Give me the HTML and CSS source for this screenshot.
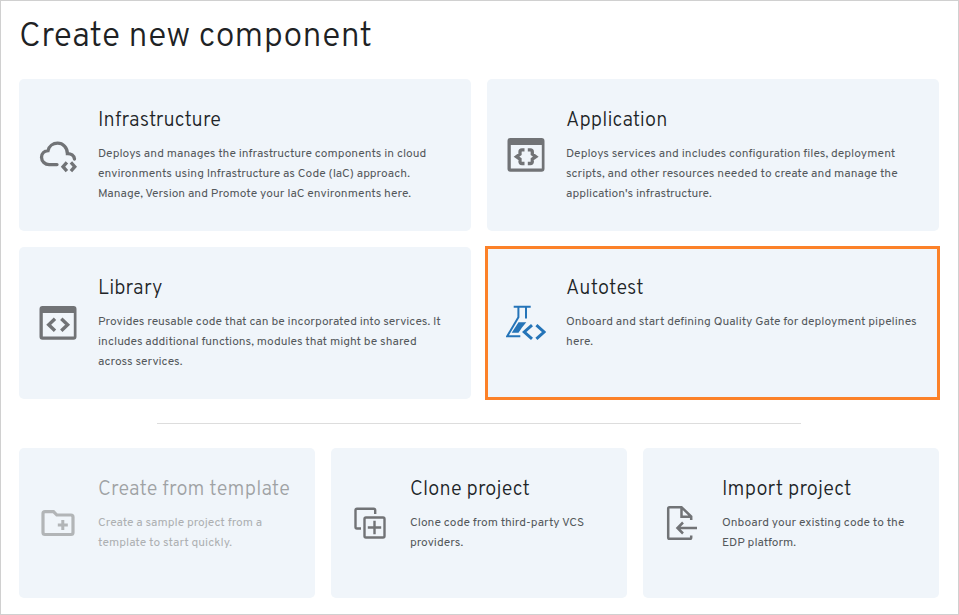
FILE: index.html
```html
<!DOCTYPE html>
<html lang="en">
<head>
<meta charset="utf-8">
<title>Create new component</title>
<link rel="stylesheet" href="styles.css">
</head>
<body>
<main class="dialog">
  <h1 class="heading">Create new component</h1>
  <section class="grid grid-two">
    <article class="card">
      <svg class="icon" viewBox="0 0 40 40"><path d="M19 29.600H11.200A7.600 7.600 0 0 1 3.500 22.200C3.500 18.500 6.300 15.900 10 15.600C11 11.200 15 8.200 19.600 8.200C25 8.200 29.300 12.300 29.400 18.600C33 18.500 36 20.500 36.500 24" stroke-width="3.300" stroke-linecap="round"/><path d="M28.900 27.300 25 31.700 28.900 36.100M32.900 27.300 36.800 31.700 32.900 36.100" stroke-width="3.300"/></svg>
      <div class="body">
        <h2 class="title">Infrastructure</h2>
        <p class="text">Deploys and manages the infrastructure components in cloud<br>environments using Infrastructure as Code (IaC) approach.<br>Manage, Version and Promote your IaC environments here.</p>
      </div>
    </article>
    <article class="card">
      <svg class="icon" viewBox="0 0 40 40"><path class="solid" fill-rule="evenodd" d="M4.500 3H35.500Q38.500 3 38.500 6V33.700Q38.500 36.700 35.500 36.700H4.500Q1.500 36.700 1.500 33.700V6Q1.500 3 4.500 3ZM4.800 10V33.600H35.800V10Z"/><path d="M18.500 14.800H16Q14 14.800 14 16.800V19.200L10.500 21.700 14 24.200V26.500Q14 28.500 16 28.500H18.500M21.800 14.800H24.300Q26.300 14.800 26.300 16.800V19.200L29.800 21.700 26.300 24.200V26.500Q26.300 28.500 24.300 28.500H21.800" stroke-width="3.300"/></svg>
      <div class="body">
        <h2 class="title">Application</h2>
        <p class="text">Deploys services and includes configuration files, deployment<br>scripts, and other resources needed to create and manage the<br>application's infrastructure.</p>
      </div>
    </article>
    <article class="card">
      <svg class="icon" viewBox="0 0 40 40"><path class="solid" fill-rule="evenodd" d="M4.500 3H35.500Q38.500 3 38.500 6V33.700Q38.500 36.700 35.500 36.700H4.500Q1.500 36.700 1.500 33.700V6Q1.500 3 4.500 3ZM4.800 10V33.600H35.800V10Z"/><path d="M17 15.800 10.700 21.800 17 27.800M23.300 15.800 29.600 21.800 23.300 27.800" stroke-width="3.400"/></svg>
      <div class="body">
        <h2 class="title">Library</h2>
        <p class="text">Provides reusable code that can be incorporated into services. It<br>includes additional functions, modules that might be shared<br>across services.</p>
      </div>
    </article>
    <article class="card selected">
      <svg class="icon blue" viewBox="0 0 40 40"><path d="M7.700 3.700H24.700M12.400 4V14.300L1.200 33.200H14.300M20 4V15.500" stroke-width="2"/><path class="solid" d="M12.500 19.300H20.300L16 24.500 12.500 29.800H5.700Z"/><path d="M26 22.200 18.300 29 26 35.800M30.400 22.200 38 29 30.400 35.800" stroke-width="3"/></svg>
      <div class="body">
        <h2 class="title">Autotest</h2>
        <p class="text">Onboard and start defining Quality Gate for deployment pipelines<br>here.</p>
      </div>
    </article>
  </section>
  <hr class="divider">
  <section class="grid grid-three">
    <article class="card disabled">
      <svg class="icon" viewBox="0 0 40 40"><path d="M5 10.500Q5 8.600 7 8.600H15.500L18.800 12H33Q35 12 35 14V29.500Q35 31.500 33 31.500H7Q5 31.500 5 29.500Z" stroke-width="3.200"/><path d="M24.800 17V27M19.800 22H29.800" stroke-width="3"/></svg>
      <div class="body">
        <h2 class="title">Create from template</h2>
        <p class="text">Create a sample project from a<br>template to start quickly.</p>
      </div>
    </article>
    <article class="card">
      <svg class="icon" viewBox="0 0 40 40"><path d="M11 25.500H7Q5.500 25.500 5.500 24V7.200Q5.500 5.700 7 5.700H23.700Q25.200 5.700 25.200 7.200V11" stroke-width="2.400"/><rect x="14.500" y="14.500" width="20" height="20" rx="1.500" stroke-width="2.400"/><path d="M24.500 17.800V31.200M17.800 24.500H31.200" stroke-width="2.400"/></svg>
      <div class="body">
        <h2 class="title">Clone project</h2>
        <p class="text">Clone code from third-party VCS<br>providers.</p>
      </div>
    </article>
    <article class="card">
      <svg class="icon" viewBox="0 0 40 40"><path d="M29.200 17V13.500L19.500 4.200H7.500Q6.200 4.200 6.200 5.500V34.500Q6.200 35.800 7.500 35.800H28Q29.200 35.800 29.200 34.500V32.500M19.500 4.500V13.800H29" stroke-width="2.500"/><path d="M35 25H16M21 19.500 15.500 25 21 30.500" stroke-width="2.500"/></svg>
      <div class="body">
        <h2 class="title">Import project</h2>
        <p class="text">Onboard your existing code to the<br>EDP platform.</p>
      </div>
    </article>
  </section>
</main>
</body>
</html>
```
FILE: styles.css
```css
* { box-sizing: border-box; }
body { margin: 0; background: #fff; font-family: Overpass, Roboto, sans-serif; }
.dialog { width: 959px; height: 615px; border: 1px solid #d0d0d0; padding: 17px 19px 0 18px; }
.heading { margin: 0 0 21px; height: 40px; line-height: 40px; font-size: 34px; font-weight: 300; color: #202224; letter-spacing: .25px; white-space: nowrap; }
.grid { display: grid; gap: 16px; }
.grid-two { grid-template-columns: repeat(2, minmax(0, 1fr)); grid-auto-rows: 152px; }
.grid-three { grid-template-columns: repeat(3, minmax(0, 1fr)); grid-auto-rows: 150px; }
.card { display: flex; align-items: center; gap: 20px; padding: 0 19px; background: #f0f5fa; border-radius: 5px; position: relative; }
.body { align-self: flex-start; padding-top: 29px; white-space: nowrap; }
.title { margin: 0; height: 26px; line-height: 26px; font-size: 20px; font-weight: 300; color: #202427; letter-spacing: .15px; }
.text { margin: 10px 0 0; line-height: 20px; font-size: 12px; font-weight: 400; color: #55595c; }
.icon { width: 40px; height: 40px; flex: none; fill: none; stroke: #717376; }
.icon .solid { fill: #717376; stroke: none; }
.icon.blue { stroke: #2574b8; }
.icon.blue .solid { fill: #2574b8; }
.selected::after { content: ""; position: absolute; inset: -1px -1px -1px -2px; border: 3px solid #fc8128; }
.divider { width: 644px; height: 1px; margin: 24px auto; border: 0; background: #ddd; }
.disabled .icon { stroke: #b2b5b7; }
.disabled .title { color: #9fa2a4; }
.disabled .text { color: #adb0b2; }
```
